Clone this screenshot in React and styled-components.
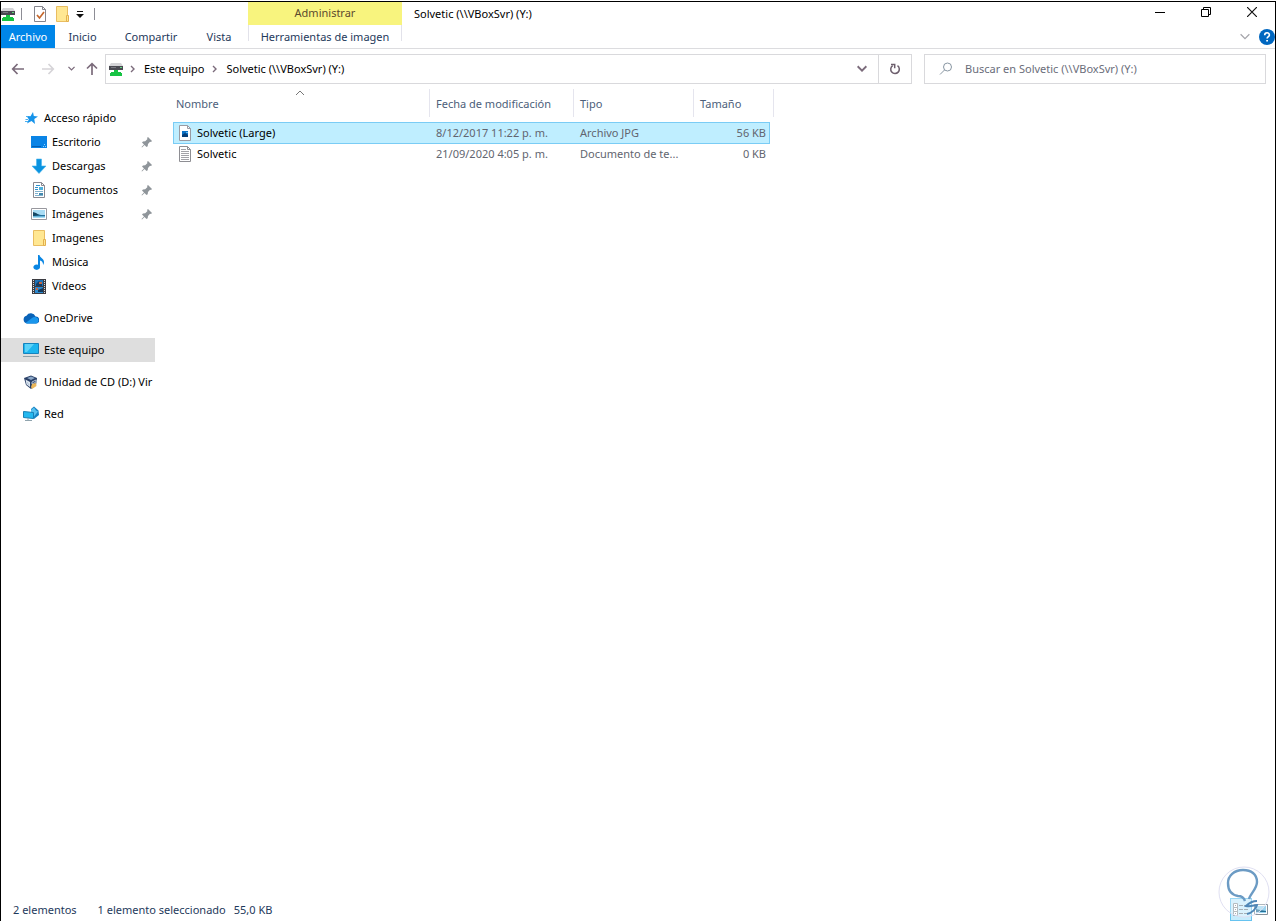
import React from 'react';
import styled, { createGlobalStyle } from 'styled-components';

const GlobalStyle = createGlobalStyle`
  *, *::before, *::after { box-sizing: border-box; }
  body { margin: 0; padding: 1px 1px 0 0; background: #fff; }
  body, button, input { font-family: 'Noto Sans', 'Open Sans', sans-serif; font-size: 11px; }
  button { border: 0; padding: 0; background: none; color: inherit; }
  svg { display: block; flex: none; }
`;

const Window = styled.div`
  position: relative;
  display: flex;
  flex-direction: column;
  min-height: calc(100vh - 1px);
  border: 1px solid #000;
  border-bottom: 0;
  color: #000;
  overflow: hidden;
`;

/* ---------- title bar and ribbon ---------- */

const TitleBar = styled.header`
  display: flex;
  height: 23px;
`;

const QuickAccess = styled.div`
  display: flex;
  align-items: center;
  width: 247px;
`;

const QuickButton = styled.button`
  display: flex;
  align-items: center;
  justify-content: center;
  width: ${(p) => p.$width || 22}px;
  height: 24px;
`;

const Divider = styled.span`
  width: 1px;
  height: 12px;
  background: #8d8d95;
  margin: 0 ${(p) => p.$gap || 0}px 0 7px;
`;

const ContextLabel = styled.div`
  width: 154px;
  background: #f8f47e;
  color: #5c4a2e;
  line-height: 21px;
  text-align: center;
`;

const Title = styled.h1`
  flex: 1;
  margin: 0;
  padding-left: 12px;
  font-size: 11px;
  font-weight: 400;
  line-height: 24px;
  white-space: nowrap;
`;

const WindowControls = styled.div`
  display: flex;
`;

const ControlButton = styled.button`
  display: flex;
  align-items: center;
  justify-content: center;
  width: 46px;
  height: 20px;
`;

const Ribbon = styled.nav`
  display: flex;
  height: 24px;
  border-bottom: 1px solid #dcdcdf;
`;

const Tab = styled.button`
  width: ${(p) => p.$width}px;
  height: 23px;
  line-height: 23px;
  white-space: nowrap;
  color: ${(p) => (p.$file ? '#fff' : '#1e395b')};
  background: ${(p) => (p.$file ? '#0086e8' : 'none')};
`;

const ContextTab = styled.div`
  height: 16px;
  border: solid #e2e2ea;
  border-width: 0 1px;
  margin-left: 2px;
`;

const RibbonTools = styled.div`
  display: flex;
  align-items: center;
  gap: 9px;
  margin-left: auto;
`;

/* ---------- address row ---------- */

const AddressRow = styled.div`
  display: flex;
  align-items: center;
  height: 40px;
  padding-right: 9px;
`;

const NavButtons = styled.div`
  display: flex;
  align-items: center;
  width: 104px;
`;

const NavButton = styled.button`
  display: flex;
  justify-content: center;
  width: ${(p) => p.$width}px;
`;

const AddressBox = styled.nav`
  display: flex;
  align-items: center;
  flex: 1;
  height: 30px;
  border: 1px solid #d9d9dc;
  padding-left: 2px;
`;

const RootCrumb = styled.button`
  display: flex;
  align-items: center;
  gap: 6px;
`;

const Crumb = styled.button`
  padding: 0 8px 2px;
  white-space: nowrap;
`;

const AddressAction = styled.button`
  display: flex;
  align-items: center;
  justify-content: center;
  width: ${(p) => p.$width}px;
  height: 28px;
  margin-left: ${(p) => (p.$push ? 'auto' : '0')};
  border-left: ${(p) => (p.$line ? '1px solid #d9d9dc' : '0')};
`;

const SearchBox = styled.label`
  display: flex;
  align-items: center;
  gap: 12px;
  width: 342px;
  height: 30px;
  margin-left: 12px;
  padding-left: 14px;
  border: 1px solid #d9d9dc;
`;

const SearchInput = styled.input`
  flex: 1;
  min-width: 0;
  border: 0;
  padding: 0 0 2px;
  outline: 0;
  &::placeholder { color: #6a6d7a; opacity: 1; }
`;

/* ---------- body ---------- */

const Body = styled.div`
  display: flex;
  flex: 1;
`;

const Sidebar = styled.nav`
  width: 154px;
  padding-top: 17px;
  flex: none;
`;

const Group = styled.ul`
  list-style: none;
  margin: 0 0 8px;
  padding: 0;
`;

const Place = styled.a`
  display: flex;
  align-items: center;
  gap: 5px;
  height: 24px;
  padding-left: ${(p) => (p.$nested ? 30 : 22)}px;
  background: ${(p) => (p.$current ? '#dedede' : 'none')};
  color: #000;
  line-height: 16px;
  text-decoration: none;
  white-space: nowrap;
`;

const PlaceName = styled.span`
  padding-bottom: 1px;
`;

const Pin = styled.span`
  margin-left: auto;
  padding-right: 2px;
`;

const Main = styled.main`
  flex: 1;
  min-width: 0;
  padding-left: 18px;
`;

const FileTable = styled.table`
  table-layout: fixed;
  width: 601px;
  border-collapse: separate;
  border-spacing: 0;
`;

const HeadCell = styled.th`
  position: relative;
  height: 28px;
  padding: ${(p) => (p.$first ? '0 0 0 3px' : '0 0 0 6px')};
  border-right: 1px solid #e5e5ee;
  color: #4c607a;
  font-weight: 400;
  text-align: left;
`;

const SortMark = styled.span`
  position: absolute;
  top: 1px;
  left: 50%;
  margin-left: -6px;
`;

const SpacerRow = styled.tr`
  height: 5px;
`;

const Cell = styled.td`
  height: ${(p) => (p.$selected ? 22 : 20)}px;
  padding: 0 3px 0 6px;
  background: ${(p) => (p.$selected ? '#bfeeff' : 'none')};
  border: solid ${(p) => (p.$selected ? '#7accf5' : 'transparent')};
  border-width: ${(p) => (p.$selected ? '1px 0' : '0')};
  color: #62656f;
  line-height: 16px;
  text-align: ${(p) => (p.$right ? 'right' : 'left')};
  white-space: nowrap;
  overflow: hidden;
  text-overflow: ellipsis;
  &:first-child { border-left-width: 1px; padding-left: 3px; color: #000; }
  &:nth-child(4) { border-right-width: 1px; }
`;

const FileName = styled.span`
  display: flex;
  align-items: center;
  gap: 4px;
`;

const StatusBar = styled.footer`
  display: flex;
  align-items: center;
  height: 23px;
  padding: 0 6px 0 12px;
  color: #1e395b;
`;

const StatusText = styled.span`
  margin-right: ${(p) => p.$gap}px;
`;

const ViewButtons = styled.div`
  display: flex;
  align-items: center;
  margin-left: auto;
`;

const ViewButton = styled.button`
  display: flex;
  align-items: center;
  justify-content: center;
  width: ${(p) => (p.$active ? 22 : 17)}px;
  height: 23px;
  border: ${(p) => (p.$active ? '1px solid #66c3f0' : '0')};
  background: ${(p) => (p.$active ? '#c6ecfc' : 'none')};
`;

const Watermark = styled.div`
  position: absolute;
  right: 5px;
  bottom: 3px;
  pointer-events: none;
`;

/* ---------- icons ---------- */

const Svg = ({ w = 16, h = 16, children, ...rest }) => (
  <svg width={w} height={h} viewBox={`0 0 ${w} ${h}`} fill="none" aria-hidden="true" {...rest}>
    {children}
  </svg>
);

const DriveIcon = () => (
  <Svg>
    <path d="M3 2h10l2 3H1z" fill="#d5d5d8" />
    <path d="M1 5h14v4H1z" fill="#4a4a52" />
    <path d="M3 6h5v1H3z" fill="#77777f" />
    <path d="M12 6h2v1h-2z" fill="#5dd97b" />
    <path d="M6 9h4v2h3v1h1v3H2v-3h1v-1h3z" fill="#16c343" />
  </Svg>
);

const PropertiesIcon = () => (
  <Svg>
    <path d="M2.500.5h8l3 3v12h-11z" fill="#fff" stroke="#85858d" />
    <path d="M10.500.5v3h3" stroke="#85858d" />
    <path d="M5 9l2.500 3L12 6" stroke="#c5672c" strokeWidth="1.700" />
  </Svg>
);

const FolderIcon = () => (
  <Svg>
    <path d="M2.500.5h11v15h-11z" fill="#ffe792" stroke="#e9bd61" />
    <path d="M12.500 9.500h2v6h-2z" fill="#ffe792" stroke="#e3b04e" />
  </Svg>
);

const CustomizeIcon = () => (
  <Svg w={8} h={8}>
    <path d="M1 1.500h6" stroke="#111" />
    <path d="M0 4h8L4 8z" fill="#111" />
  </Svg>
);

const MinimizeIcon = () => <Svg w={10} h={10}><path d="M0 5.500h10" stroke="#000" /></Svg>;
const RestoreIcon = () => (
  <Svg w={10} h={10}><path d="M.5 2.500h7v7h-7zM2.500 2.500v-2h7v7h-2" stroke="#000" /></Svg>
);
const CloseIcon = () => <Svg w={10} h={10}><path d="M0 0l10 10M10 0L0 10" stroke="#111" strokeWidth="1.200" /></Svg>;

const ChevronDown = ({ w = 8, color = '#7b6b7b', stroke = 1.5 }) => (
  <svg width={w} height={w * 0.75} viewBox="0 0 8 6" fill="none" aria-hidden="true">
    <path d="M.5 1L4 4.500 7.500 1" stroke={color} strokeWidth={stroke} />
  </svg>
);

const ChevronRight = () => (
  <Svg w={6} h={8}><path d="M1 1l3 3-3 3" stroke="#7b6b7b" strokeWidth="1.400" /></Svg>
);

const HelpIcon = () => (
  <Svg>
    <circle cx="8" cy="8" r="8" fill="#0067c0" />
    <path d="M5.700 6.200c0-3.200 4.700-3.200 4.700-.3 0 1.700-2.300 1.700-2.300 3.700" stroke="#fff" strokeWidth="1.600" />
    <path d="M7.200 10.900h1.800v1.700H7.200z" fill="#fff" />
  </Svg>
);

const Arrow = ({ dir, color = '#7b6b7b' }) => (
  <Svg w={14} h={14} style={{ transform: `rotate(${dir}deg)` }}>
    <path d="M13 7H2M6.500 2L1.700 7l4.800 5" stroke={color} strokeWidth="1.700" />
  </Svg>
);

const RefreshIcon = () => (
  <Svg w={12} h={12}>
    <path d="M8.500 2.700A4.300 4.300 0 1 1 3.700 2.600" stroke="#6d5f6d" strokeWidth="1.500" />
    <path d="M2 1.500h3.700v3.700" stroke="#6d5f6d" strokeWidth="1.500" />
  </Svg>
);

const SearchIcon = () => (
  <Svg w={14} h={14}>
    <circle cx="8.500" cy="5" r="4" stroke="#8896a2" />
    <path d="M5.500 8L1 12.500" stroke="#8896a2" />
  </Svg>
);

const StarIcon = () => (
  <Svg>
    <path d="M10 2l.8 4 4.200.5-3.700 2.500.7 5-3.500-3L4 13.500l1.800-4.300L3.500 6l4 .2z" fill="#1593ea" />
    <path d="M2.500 9.500H5M2 11.500h3M5 6.500H3" stroke="#4cb0ef" />
  </Svg>
);

const DesktopIcon = () => (
  <Svg>
    <path d="M0 2h16v12H0z" fill="#0a84e6" />
    <path d="M1 12.500h9" stroke="#075eb0" />
    <path d="M12 12.500h3M13 10.500h2" stroke="#8ad1ff" strokeDasharray="1 1" />
  </Svg>
);

const DownloadIcon = () => (
  <Svg><path d="M5.500 1h5v7H15l-7 7.500L1 8h4.500z" fill="#0b93e0" stroke="#47b5ee" strokeWidth=".6" /></Svg>
);

const DocumentIcon = () => (
  <Svg>
    <path d="M2.500.5h8l3 3v12h-11z" fill="#fff" stroke="#898991" />
    <path d="M10.500.5v3h3" stroke="#898991" />
    <path d="M5 3.500h4M4 5.500h3M4 7.500h3" stroke="#2f93cf" />
    <path d="M8 5h4v3H8z" fill="#4fb1dd" />
    <path d="M4 9.500h8M4 11.500h3M4 13.500h8" stroke="#7eb2cf" />
    <path d="M8 11h4v2H8z" fill="#4388ad" />
  </Svg>
);

const PictureIcon = () => (
  <Svg>
    <path d="M.5 2.500h15v11H.5z" fill="#fff" stroke="#98989e" />
    <path d="M2 4h12v8H2z" fill="#a8dcf4" />
    <path d="M2 7l4 1 4 1h4v1H2z" fill="#26719c" />
    <path d="M2 6l3 1 3 2-6 1z" fill="#174864" />
    <path d="M2 10.500h12" stroke="#68b6da" />
  </Svg>
);

const MusicIcon = () => (
  <Svg>
    <path d="M7 1h1.500c.3 3 4.500 3.500 4.500 7 0 1.300-.5 2.300-1 3 .3-2.500-1-4-3-4.500V13a3.300 2.700 0 1 1-2-2.300z" fill="#0a86e3" />
  </Svg>
);

const VideoIcon = () => (
  <Svg>
    <path d="M1 1h14v15H1z" fill="#3c3c42" />
    <path d="M2.500 2v13M13.500 2v13" stroke="#ddd" strokeDasharray="1 1" />
    <path d="M4 2h8v6H4z" fill="#1d73b8" />
    <path d="M4 9h8v6H4z" fill="#2b89cf" />
    <path d="M5 6l3-3 3 3v2H5z" fill="#153c63" />
    <path d="M8 4h3v2H8zM5 10h2v2H5z" fill="#c06643" />
    <path d="M7 12l5-2v4H7z" fill="#12385a" />
  </Svg>
);

const CloudIcon = () => (
  <Svg>
    <path d="M4 13.500a4 4 0 0 1-.5-7.800A5 5 0 0 1 12.500 6.500 3.500 3.500 0 0 1 13 13.500z" fill="#0a63b8" />
    <path d="M2.500 13L9 8c1.200-1 2.800-1.500 4-.7a3.200 3.200 0 0 1 0 6.200H4z" fill="#1996ec" />
  </Svg>
);

const ComputerIcon = () => (
  <Svg>
    <path d="M.5 1.500h15v10H.5z" fill="#1cb5ef" stroke="#1683bd" />
    <path d="M2 2h9L4 10H2z" fill="#5cd2f8" />
    <path d="M0 14.500h16" stroke="#8fa0a8" strokeWidth="1" />
  </Svg>
);

const BoxIcon = () => (
  <Svg>
    <path d="M8 1.500l6 2.500-1 7-5 4-5-4-2-7z" fill="#293f66" />
    <path d="M4 4l4-1.500L12 4 8 6z" fill="#8da9c8" />
    <path d="M2.500 5.500L7 8v5l-3.500-2.500z" fill="#dbe5ef" />
    <path d="M4 8l2 3M13 6L9 8v2l4-2z" stroke="#b3c4d8" />
    <path d="M9 10l4-1 .5 3-4.500 3-1-2z" fill="#eab65a" />
  </Svg>
);

const NetworkIcon = () => (
  <Svg>
    <path d="M11 .5l4.500 4L16 9l-5 4-3-3V3z" fill="#1683c4" />
    <path d="M8 4l3-2.500 2 3 2 1-4 5-3-4z" fill="#58c1ef" />
    <path d="M.5 5.500l10 1v6l-10-1z" fill="#24b8ef" stroke="#1880b5" />
    <path d="M5 12v2M2 14.500h7" stroke="#90a4ae" />
  </Svg>
);

const PinIcon = () => (
  <Svg w={12} h={12}>
    <path d="M7 1l4 4-1 1-1-.3L7 8l-.3 2.200L5.500 11 3.500 9 1 11.500.5 11 3 8.500l-2-2L2 5.500l2.200-.2L6.500 3 6 2z" fill="#8f959a" />
  </Svg>
);

const SortIcon = () => <Svg w={10} h={6}><path d="M1 5l4-4 4 4" stroke="#777" /></Svg>;

const ImageFileIcon = () => (
  <Svg>
    <path d="M2.500.5h8l3 3v12h-11z" fill="#fff" stroke="#9a9aa2" />
    <path d="M10.500.5v3h3" stroke="#9a9aa2" />
    <path d="M5 6h6v6H5z" fill="#0a71c5" />
    <path d="M5 10l3-2 3 2v2H5z" fill="#073f77" />
    <path d="M9 7h2v1H9z" fill="#6fc1ef" />
  </Svg>
);

const TextFileIcon = () => (
  <Svg>
    <path d="M2.500.5h8l3 3v12h-11z" fill="#fff" stroke="#8e8e93" />
    <path d="M10.500.5v3h3" stroke="#8e8e93" />
    <path d="M4 3.500h5M4 5.500h8M4 7.500h8M4 9.500h8M4 11.500h8M4 13.500h8" stroke="#a3a3a8" />
  </Svg>
);

const DetailsIcon = () => (
  <Svg w={16} h={14}>
    <path d="M.5.5h4v4h-4zM.5 4.500h4v4h-4zM.5 8.500h4v4h-4z" fill="#fff" stroke="#8e989f" />
    <path d="M2 2.500h1M2 6.500h1M2 10.500h1M6 2.500h4M11 2.500h4M6 6.500h4M11 6.500h4M6 10.500h4M11 10.500h4" stroke="#75848e" />
  </Svg>
);

const ThumbsIcon = () => (
  <Svg w={14} h={11}>
    <path d="M.5.5h13v10H.5z" fill="#fff" stroke="#85919a" />
    <path d="M2 2h10v7H2z" fill="#9bd5f0" />
    <path d="M2 5l4 1 6 1v1H2z" fill="#246f96" />
  </Svg>
);

const BulbLogo = () => (
  <Svg w={52} h={52}>
    <circle cx="26" cy="26" r="25" fill="#fff" fillOpacity=".35" stroke="#e0e0f2" />
    <path d="M31 33c1-5 8-10 8-17C39 8 33 4 25 4 16 4 10 10 10 17c0 8 4 12 10 13 4 0 6 2 7 5" stroke="#6c9bc4" strokeWidth="2.400" />
    <path d="M39 35c-5 0-9 3-11 5 5 1 8-1 11-1-1 4-5 8-10 9" stroke="#4f87b7" strokeWidth="2" />
  </Svg>
);

/* ---------- data ---------- */

const groups = [
  [
    { label: 'Acceso rápido', Icon: StarIcon },
    { label: 'Escritorio', Icon: DesktopIcon, nested: true, pinned: true },
    { label: 'Descargas', Icon: DownloadIcon, nested: true, pinned: true },
    { label: 'Documentos', Icon: DocumentIcon, nested: true, pinned: true },
    { label: 'Imágenes', Icon: PictureIcon, nested: true, pinned: true },
    { label: 'Imagenes', Icon: FolderIcon, nested: true },
    { label: 'Música', Icon: MusicIcon, nested: true },
    { label: 'Vídeos', Icon: VideoIcon, nested: true },
  ],
  [{ label: 'OneDrive', Icon: CloudIcon }],
  [{ label: 'Este equipo', Icon: ComputerIcon, current: true }],
  [{ label: 'Unidad de CD (D:) Vir', Icon: BoxIcon }],
  [{ label: 'Red', Icon: NetworkIcon }],
];

const files = [
  { name: 'Solvetic (Large)', date: '8/12/2017 11:22 p. m.', type: 'Archivo JPG', size: '56 KB', Icon: ImageFileIcon, selected: true },
  { name: 'Solvetic', date: '21/09/2020 4:05 p. m.', type: 'Documento de te...', size: '0 KB', Icon: TextFileIcon },
];

export default function App() {
  return (
    <Window>
      <GlobalStyle />
      <TitleBar>
        <QuickAccess>
          <QuickButton $width={13} aria-label="Unidad"><DriveIcon /></QuickButton>
          <Divider $gap={7} />
          <QuickButton aria-label="Propiedades"><PropertiesIcon /></QuickButton>
          <QuickButton aria-label="Nueva carpeta"><FolderIcon /></QuickButton>
          <QuickButton $width={14} aria-label="Personalizar"><CustomizeIcon /></QuickButton>
          <Divider />
        </QuickAccess>
        <ContextLabel>Administrar</ContextLabel>
        <Title>Solvetic (\\VBoxSvr) (Y:)</Title>
        <WindowControls>
          <ControlButton aria-label="Minimizar"><MinimizeIcon /></ControlButton>
          <ControlButton aria-label="Restaurar"><RestoreIcon /></ControlButton>
          <ControlButton aria-label="Cerrar"><CloseIcon /></ControlButton>
        </WindowControls>
      </TitleBar>

      <Ribbon>
        <Tab $file $width={54}>Archivo</Tab>
        <Tab $width={55}>Inicio</Tab>
        <Tab $width={82}>Compartir</Tab>
        <Tab $width={54}>Vista</Tab>
        <ContextTab><Tab $width={152}>Herramientas de imagen</Tab></ContextTab>
        <RibbonTools>
          <button aria-label="Expandir la cinta"><ChevronDown w={10} color="#a5a5ab" stroke={1} /></button>
          <button aria-label="Ayuda"><HelpIcon /></button>
        </RibbonTools>
      </Ribbon>

      <AddressRow>
        <NavButtons>
          <NavButton $width={34} aria-label="Atrás"><Arrow dir={0} /></NavButton>
          <NavButton $width={26} aria-label="Adelante"><Arrow dir={180} color="#d6d4d8" /></NavButton>
          <NavButton $width={20} aria-label="Recientes"><ChevronDown w={7} /></NavButton>
          <NavButton $width={22} aria-label="Subir"><Arrow dir={90} /></NavButton>
        </NavButtons>
        <AddressBox aria-label="Ruta">
          <RootCrumb aria-label="Raíz"><DriveIcon /><ChevronRight /></RootCrumb>
          <Crumb>Este equipo</Crumb>
          <ChevronRight />
          <Crumb>Solvetic (\\VBoxSvr) (Y:)</Crumb>
          <AddressAction $push $width={32} aria-label="Historial"><ChevronDown w={10} /></AddressAction>
          <AddressAction $line $width={33} aria-label="Actualizar"><RefreshIcon /></AddressAction>
        </AddressBox>
        <SearchBox>
          <SearchIcon />
          <SearchInput aria-label="Buscar" placeholder="Buscar en Solvetic (\\VBoxSvr) (Y:)" />
        </SearchBox>
      </AddressRow>

      <Body>
        <Sidebar aria-label="Ubicaciones">
          {groups.map((items) => (
            <Group key={items[0].label}>
              {items.map(({ label, Icon, nested, pinned, current }) => (
                <li key={label}>
                  <Place href="#" $nested={nested} $current={current}>
                    <Icon />
                    <PlaceName>{label}</PlaceName>
                    {pinned && <Pin><PinIcon /></Pin>}
                  </Place>
                </li>
              ))}
            </Group>
          ))}
        </Sidebar>

        <Main>
          <FileTable>
            <colgroup>
              <col style={{ width: 257 }} />
              <col style={{ width: 144 }} />
              <col style={{ width: 120 }} />
              <col style={{ width: 76 }} />
              <col style={{ width: 4 }} />
            </colgroup>
            <thead>
              <tr>
                <HeadCell $first scope="col">Nombre<SortMark><SortIcon /></SortMark></HeadCell>
                <HeadCell scope="col">Fecha de modificación</HeadCell>
                <HeadCell scope="col">Tipo</HeadCell>
                <HeadCell scope="col" colSpan={2}>Tamaño</HeadCell>
              </tr>
            </thead>
            <tbody>
              <SpacerRow />
              {files.map(({ name, date, type, size, Icon, selected }) => (
                <tr key={name}>
                  <Cell $selected={selected}><FileName><Icon />{name}</FileName></Cell>
                  <Cell $selected={selected}>{date}</Cell>
                  <Cell $selected={selected}>{type}</Cell>
                  <Cell $selected={selected} $right>{size}</Cell>
                </tr>
              ))}
            </tbody>
          </FileTable>
        </Main>
      </Body>

      <StatusBar>
        <StatusText $gap={21}>2 elementos</StatusText>
        <StatusText $gap={8}>1 elemento seleccionado</StatusText>
        <StatusText $gap={0}>55,0 KB</StatusText>
        <ViewButtons>
          <ViewButton $active aria-label="Detalles"><DetailsIcon /></ViewButton>
          <ViewButton aria-label="Iconos grandes"><ThumbsIcon /></ViewButton>
        </ViewButtons>
      </StatusBar>
      <Watermark><BulbLogo /></Watermark>
    </Window>
  );
}
